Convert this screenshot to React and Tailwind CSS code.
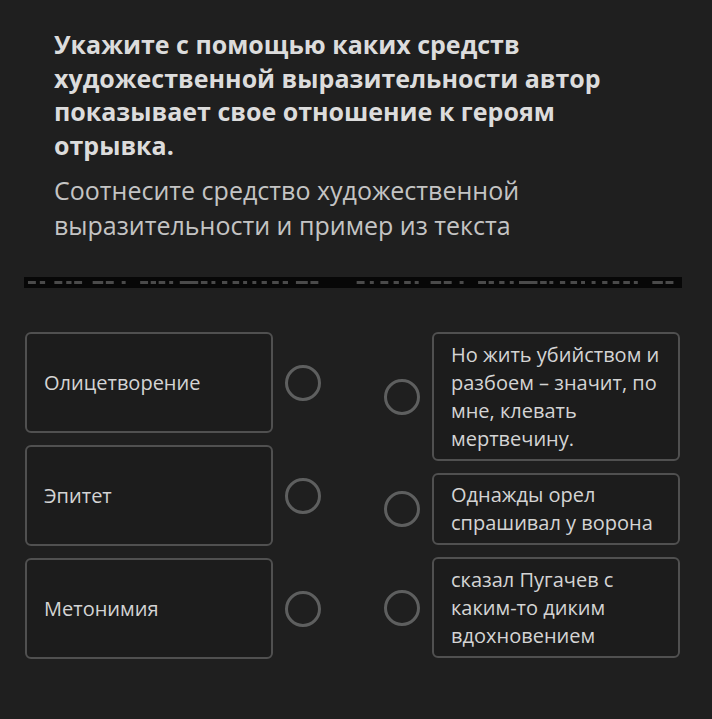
import React from "react";

const left = ["Олицетворение", "Эпитет", "Метонимия"];
const right = [
  { text: "Но жить убийством и разбоем – значит, по мне, клевать мертвечину.", h: "h-[129px]" },
  { text: "Однажды орел спрашивал у ворона", h: "h-[72px]" },
  { text: "сказал Пугачев с каким-\u2060то диким вдохновением", h: "h-[101px]" },
];

const segs = [
  [3,6],[12,4],[23,6],[32,4],[38,6],[52,8],[62,6],[74,3],[88,6],[96,4],[102,5],[110,3],[118,14],[134,5],[142,3],[150,4],[158,5],[166,3],[173,3],[180,4],[188,5],[196,4],[206,9],[217,6],
  [252,6],[262,3],[270,6],[280,4],[288,5],[296,3],[308,8],[318,6],[330,3],[344,6],[352,4],[360,4],[368,3],[375,14],[391,5],[398,3],[406,4],[414,5],[422,3],[430,3],[438,4],[446,5],[454,5],[462,3],[476,8],[486,6],
];

function Bar() {
  return (
    <svg width="658" height="11" viewBox="0 0 658 11" className="block">
      <rect x="0" y="0" width="658" height="11" fill="#070707" />
      {segs.map(([x, w], i) => (
        <rect key={i} x={x * 1.32} y="4" width={w * 1.32} height="3" fill="#4a4a4a" />
      ))}
    </svg>
  );
}

function Circle() {
  return <div className="w-[36px] h-[36px] shrink-0 rounded-full border-[3px] border-[#5e5f5f]" />;
}

export default function App() {
  return (
    <div className="min-h-[719px] w-[712px] bg-[#1f1f1f] text-[#d6d6d6]" style={{ fontFamily: '"Open Sans", "Noto Sans", sans-serif' }}>
      <div className="pl-[54px] pt-[28px]">
        <h1 className="w-[580px] text-[25px] font-bold leading-[33.5px] text-[#dcdcdc]">
          Укажите с помощью каких средств художественной выразительности автор показывает свое отношение к героям отрывка.
        </h1>
        <p className="w-[560px] mt-[11px] text-[25px] leading-[35px] text-[#c4c4c4]">
          Соотнесите средство художественной выразительности и пример из текста
        </p>
      </div>
      <div className="ml-[24px] mt-[34px]">
        <Bar />
      </div>
      <div className="ml-[25px] mt-[44px] flex gap-[63px]">
        <div className="flex flex-col gap-[12px]">
          {left.map((t) => (
            <div key={t} className="flex items-center gap-[12px]">
              <div className="w-[248px] h-[101px] rounded-[6px] border-2 border-[#505050] bg-[#1c1c1c] flex items-center pl-[17px] text-[20px] text-[#d4d4d4]">
                {t}
              </div>
              <Circle />
            </div>
          ))}
        </div>
        <div className="flex flex-col gap-[12px]">
          {right.map((r, i) => (
            <div key={i} className="flex items-center gap-[12px]">
              <Circle />
              <div className={`w-[248px] ${r.h} rounded-[6px] border-2 border-[#505050] bg-[#1c1c1c] flex items-center pl-[17px] pr-[10px] text-[20px] leading-[28px] text-[#d4d4d4]`}>
                <div>{r.text}</div>
              </div>
            </div>
          ))}
        </div>
      </div>
    </div>
  );
}
